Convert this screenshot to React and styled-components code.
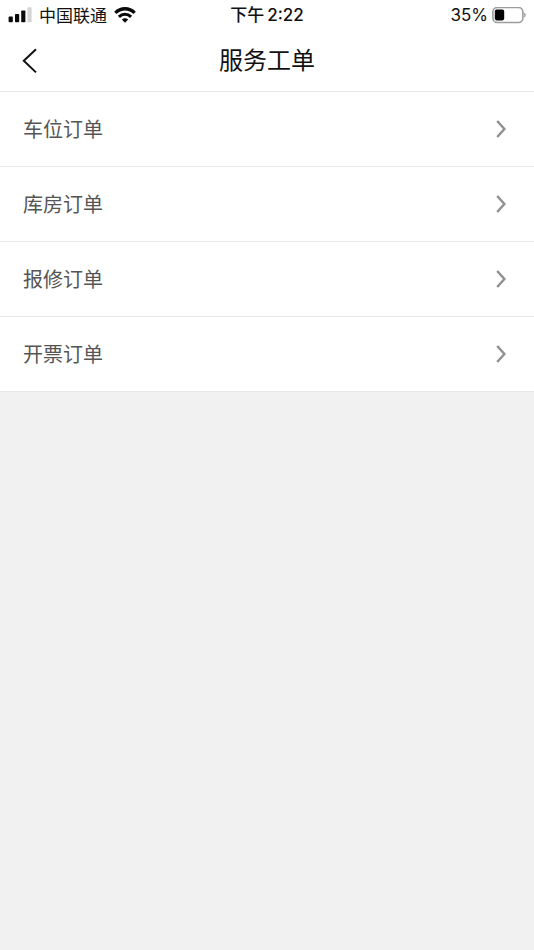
import styled, { createGlobalStyle } from 'styled-components';

const orders = [
  { id: 'parking', label: '车位订单' },
  { id: 'storage', label: '库房订单' },
  { id: 'repair', label: '报修订单' },
  { id: 'invoice', label: '开票订单' },
];

const SignalIcon = () => (
  <svg width="24" height="16" viewBox="0 0 24 16" aria-hidden="true">
    <rect x="0.6" y="9.6" width="4.2" height="5.6" rx="0.8" fill="#0a0a0a" />
    <rect x="7" y="7" width="4.2" height="8.2" rx="0.8" fill="#0a0a0a" />
    <rect x="13.2" y="3.4" width="4.2" height="11.8" rx="0.8" fill="#0a0a0a" />
    <rect x="19.4" y="0.2" width="4.2" height="15" rx="0.8" fill="#d4d4d4" />
  </svg>
);

const WifiIcon = () => (
  <svg width="22" height="16" viewBox="0 0 22 16" fill="none" stroke="#0a0a0a" aria-hidden="true">
    <path d="M1.4 5.9C6.8 0.4 15.2 0.4 20.6 5.9" strokeWidth="3.4" />
    <path d="M4.9 9.9C8.3 6.5 13.7 6.5 17.1 9.9" strokeWidth="3" />
    <path d="M11 15.8L7.8 12.6C9.6 10.8 12.4 10.8 14.2 12.6Z" fill="#0a0a0a" stroke="none" />
  </svg>
);

const BatteryIcon = () => (
  <svg width="34" height="17" viewBox="0 0 34 17" aria-hidden="true">
    <rect x="0.9" y="0.5" width="30" height="15" rx="4.4" fill="none" stroke="#9c9c9c" strokeWidth="1.6" />
    <rect x="2.8" y="2.6" width="9.4" height="10.8" rx="1.8" fill="#000" />
    <path d="M32.2 5.4C34.2 6.2 34.2 9.8 32.2 10.6Z" fill="#9c9c9c" />
  </svg>
);

const BackIcon = () => (
  <svg width="16" height="26" viewBox="0 0 16 26" fill="none" stroke="#111" strokeWidth="2" aria-hidden="true">
    <path d="M14 1.2L1.8 12.8L14 24.4" />
  </svg>
);

const ArrowIcon = () => (
  <svg width="10" height="18" viewBox="0 0 10 18" fill="none" stroke="#919191" strokeWidth="2.5" aria-hidden="true">
    <path d="M1.2 1L8.4 9L1.2 17" />
  </svg>
);

const App = () => {
  return (
    <>
      <GlobalStyle />
      <StatusBar>
        <Carrier>
          <SignalIcon />
          <StatusText>中国联通</StatusText>
          <WifiIcon />
        </Carrier>
        <Clock>
          <span>下午</span>
          <span>2:22</span>
        </Clock>
        <Battery>
          <span>35%</span>
          <BatteryIcon />
        </Battery>
      </StatusBar>
      <NavBar>
        <BackButton type="button" aria-label="返回">
          <BackIcon />
        </BackButton>
        <Title>服务工单</Title>
      </NavBar>
      <OrderList>
        {orders.map((order) => (
          <li key={order.id}>
            <OrderLink href={`#${order.id}`}>
              <OrderLabel>{order.label}</OrderLabel>
              <ArrowIcon />
            </OrderLink>
          </li>
        ))}
      </OrderList>
    </>
  );
};

export default App;

const GlobalStyle = createGlobalStyle`
  * {
    box-sizing: border-box;
  }
  body {
    margin: 0;
    background: #f1f1f1;
    font-family: Inter, 'Noto Sans CJK SC', sans-serif;
  }
  svg {
    display: block;
    flex: none;
  }
`;

const StatusBar = styled.div`
  display: grid;
  grid-template-columns: 1fr auto 1fr;
  align-items: center;
  height: 30px;
  padding: 0 8px;
  background: #fff;
  color: #111;
  font-size: 17px;
  line-height: 28px;
`;

const Carrier = styled.div`
  display: flex;
  align-items: center;
  gap: 7px;
`;

const StatusText = styled.span`
  padding-top: 2px;
`;

const Clock = styled.div`
  display: flex;
  gap: 3px;
  font-weight: 500;
`;

const Battery = styled.div`
  display: flex;
  align-items: center;
  justify-content: flex-end;
  gap: 4px;
`;

const NavBar = styled.header`
  display: grid;
  grid-template-columns: 60px 1fr 60px;
  align-items: center;
  height: 62px;
  background: #fff;
  border-bottom: 1px solid #e8e8e8;
`;

const BackButton = styled.button`
  display: flex;
  align-items: center;
  height: 100%;
  padding: 0 0 0 22px;
  border: 0;
  background: none;
  cursor: pointer;
`;

const Title = styled.h1`
  margin: 0;
  color: #111;
  font-size: 24px;
  font-weight: 400;
  line-height: 36px;
  text-align: center;
`;

const OrderList = styled.ul`
  margin: 0;
  padding: 0;
  list-style: none;
  background: #fff;
`;

const OrderLink = styled.a`
  display: flex;
  align-items: center;
  justify-content: space-between;
  height: 75px;
  padding: 0 28px 0 23px;
  border-bottom: 1px solid #e8e8e8;
  color: #555;
  font-size: 20px;
  line-height: 30px;
  text-decoration: none;
`;

const OrderLabel = styled.span`
  padding-top: 2px;
`;
